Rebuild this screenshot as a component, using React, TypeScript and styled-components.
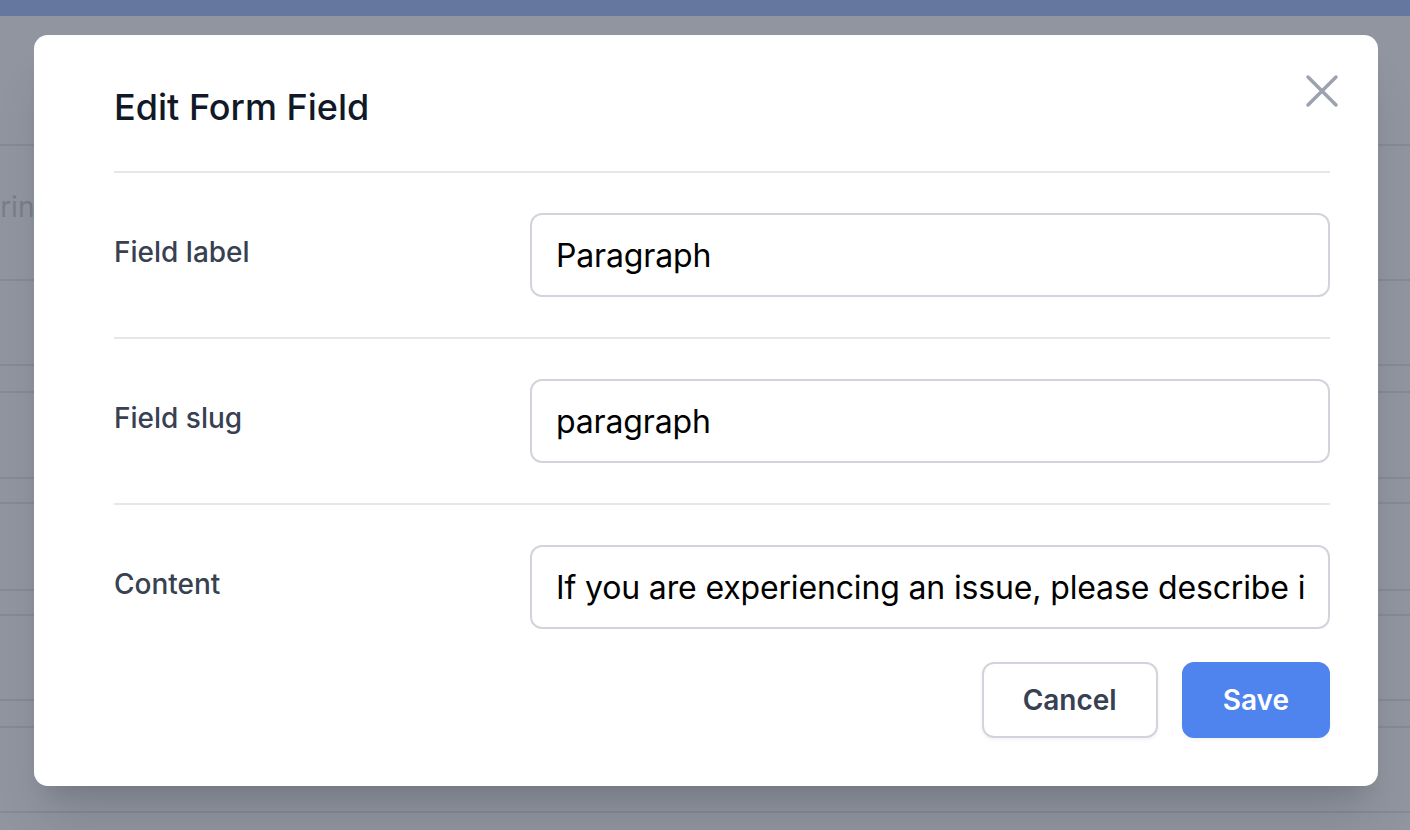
import React from "react";
import styled, { createGlobalStyle } from "styled-components";

const GlobalStyle = createGlobalStyle`
  html, body {
    margin: 0;
    padding: 0;
    width: 100%;
    height: 100%;
    overflow: hidden;
    background: #ffffff;
    font-family: Inter, "Noto Sans", "Liberation Sans", sans-serif;
  }
  * { box-sizing: border-box; }
`;

const Page = styled.div`
  position: relative;
  width: 1410px;
  height: 830px;
  overflow: hidden;
  background: #ffffff;
`;

const TopBar = styled.div`
  height: 16px;
  background: #5386fb;
`;

const BgList = styled.div`
  display: flex;
  flex-direction: column;
`;

const BgRow = styled.div<{ $h: number }>`
  height: ${(p) => p.$h}px;
  border-bottom: 2px solid #d3d3da;
  display: flex;
  align-items: flex-start;
`;

const BgText = styled.span`
  margin-left: -27px;
  padding-top: 41px;
  font-size: 28px;
  line-height: 40px;
  color: #9ca3af;
  white-space: nowrap;
`;

const Overlay = styled.div`
  position: absolute;
  inset: 0;
  background: rgba(107, 114, 128, 0.75);
  display: flex;
  align-items: flex-start;
  padding: 35px 32px 0 34px;
`;

const Dialog = styled.div`
  position: relative;
  width: 100%;
  background: #ffffff;
  border-radius: 14px;
  padding: 44px 48px 48px 80px;
  box-shadow: 0 40px 50px -10px rgba(0, 0, 0, 0.12),
    0 16px 20px -12px rgba(0, 0, 0, 0.1);
`;

const CloseButton = styled.button`
  position: absolute;
  top: 28px;
  right: 28px;
  width: 56px;
  height: 56px;
  padding: 0;
  border: none;
  background: transparent;
  display: flex;
  cursor: pointer;
`;

const Header = styled.div`
  padding-bottom: 36px;
  border-bottom: 2px solid #e5e7eb;
`;

const Title = styled.h2`
  margin: 0;
  font-size: 36px;
  line-height: 56px;
  font-weight: 500;
  color: #111827;
`;

const FieldRow = styled.div<{ $last?: boolean }>`
  display: grid;
  grid-template-columns: repeat(3, 1fr);
  column-gap: 32px;
  align-items: start;
  padding: 40px 0 ${(p) => (p.$last ? "0" : "40px")};
  border-bottom: ${(p) => (p.$last ? "none" : "2px solid #e5e7eb")};
`;

const Label = styled.label`
  padding-top: 19px;
  font-size: 28px;
  line-height: 40px;
  font-weight: 500;
  color: #374151;
`;

const Input = styled.input`
  grid-column: span 2;
  width: 100%;
  height: 84px;
  padding: 0 24px;
  border: 2px solid #d1d5db;
  border-radius: 12px;
  font-family: Inter, "Noto Sans", "Liberation Sans", sans-serif;
  font-size: 32px;
  letter-spacing: -0.15px;
  color: #000000;
  background: #ffffff;
  outline: none;
`;

const Actions = styled.div`
  display: flex;
  justify-content: flex-end;
  gap: 24px;
  padding-top: 33px;
`;

const Button = styled.button<{ $primary?: boolean }>`
  height: 76px;
  padding: 0 39px;
  border-radius: 12px;
  font-family: Inter, "Noto Sans", "Liberation Sans", sans-serif;
  font-size: 28px;
  font-weight: 600;
  cursor: pointer;
  border: 2px solid ${(p) => (p.$primary ? "#4f83ee" : "#d1d5db")};
  background: ${(p) => (p.$primary ? "#4f83ee" : "#ffffff")};
  color: ${(p) => (p.$primary ? "#ffffff" : "#374151")};
  box-shadow: 0 2px 4px rgba(0, 0, 0, 0.05);
`;

const bgRows = [130, 135, 85, 27, 86, 25, 87, 25, 85, 27, 85, 40];

const fields = [
  { label: "Field label", value: "Paragraph" },
  { label: "Field slug", value: "paragraph" },
  {
    label: "Content",
    value:
      "If you are experiencing an issue, please describe it in as much detail as possible.",
  },
];

export default function App() {
  return (
    <>
      <GlobalStyle />
      <Page>
        <TopBar />
        <BgList>
          {bgRows.map((h, i) => (
            <BgRow key={i} $h={h}>
              {i === 1 && <BgText>String</BgText>}
            </BgRow>
          ))}
        </BgList>
        <Overlay>
          <Dialog>
            <CloseButton aria-label="Close">
              <svg
                width="56"
                height="56"
                viewBox="0 0 24 24"
                fill="none"
                stroke="#9ca3af"
                strokeWidth="1.5"
                strokeLinecap="round"
                strokeLinejoin="round"
              >
                <path d="M6 18L18 6M6 6l12 12" />
              </svg>
            </CloseButton>
            <Header>
              <Title>Edit Form Field</Title>
            </Header>
            {fields.map((f, i) => (
              <FieldRow key={f.label} $last={i === fields.length - 1}>
                <Label>{f.label}</Label>
                <Input readOnly value={f.value} />
              </FieldRow>
            ))}
            <Actions>
              <Button>Cancel</Button>
              <Button $primary>Save</Button>
            </Actions>
          </Dialog>
        </Overlay>
      </Page>
    </>
  );
}
